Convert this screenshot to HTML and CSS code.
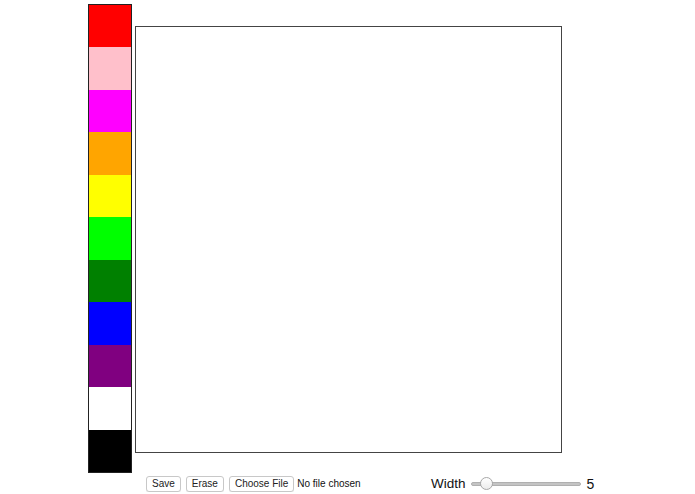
FILE: index.html
```html
<!DOCTYPE html>
<html>
<head>
<meta charset="utf-8">
<link rel="stylesheet" href="styles.css">
</head>
<body>
<div class="stage">
  <div class="palette">
    <div class="swatch red"></div>
    <div class="swatch pink"></div>
    <div class="swatch magenta"></div>
    <div class="swatch orange"></div>
    <div class="swatch yellow"></div>
    <div class="swatch lime"></div>
    <div class="swatch green"></div>
    <div class="swatch blue"></div>
    <div class="swatch purple"></div>
    <div class="swatch white"></div>
    <div class="swatch black"></div>
  </div>
  <div class="canvas"></div>
</div>
<div class="controls">
  <div class="buttons">
    <button class="btn">Save</button>
    <button class="btn">Erase</button>
    <button class="btn">Choose File</button>
    <span class="filename">No file chosen</span>
  </div>
  <div class="width">
    <span class="width-label">Width</span>
    <div class="slider">
      <div class="track"></div>
      <div class="thumb"></div>
    </div>
    <span class="width-value">5</span>
  </div>
</div>
</body>
</html>
```
FILE: styles.css
```css
html, body {
  margin: 0;
  padding: 0;
  background: #fff;
  font-family: "Liberation Sans", Arial, sans-serif;
}
.stage {
  display: flex;
  align-items: flex-start;
  padding: 4px 0 0 88px;
}
.palette {
  width: 42px;
  height: 467px;
  border: 1px solid #222;
  display: flex;
  flex-direction: column;
}
.swatch { flex: 1; }
.red { background: #ff0000; }
.pink { background: #ffc0cb; }
.magenta { background: #ff00ff; }
.orange { background: #ffa500; }
.yellow { background: #ffff00; }
.lime { background: #00ff00; }
.green { background: #008000; }
.blue { background: #0000ff; }
.purple { background: #800080; }
.white { background: #ffffff; }
.black { background: #000000; }
.canvas {
  margin: 22px 0 0 3px;
  width: 425px;
  height: 425px;
  border: 1px solid #444;
  background: #fff;
}
.controls {
  display: flex;
  align-items: center;
  padding: 2px 0 0 146px;
  height: 17px;
}
.buttons {
  display: flex;
  align-items: center;
  gap: 5px;
  width: 285px;
}
.btn {
  font-family: "Liberation Sans", Arial, sans-serif;
  font-size: 10px;
  color: #222;
  background: #fff;
  border: 1px solid #c8c8c8;
  border-radius: 3px;
  height: 16px;
  padding: 0 5px;
  margin: 0;
  line-height: 14px;
  box-shadow: 0 1px 0 rgba(0,0,0,0.06);
}
.filename {
  font-size: 10px;
  color: #111;
  margin-left: -2px;
}
.width {
  display: flex;
  align-items: center;
}
.width-label {
  font-size: 13.5px;
  color: #111;
}
.slider {
  position: relative;
  width: 110px;
  height: 16px;
  margin-left: 5px;
}
.track {
  position: absolute;
  left: 0;
  right: 0;
  top: 6px;
  height: 4px;
  background: #c4c4c4;
  border: 1px solid #b0b0b0;
  border-radius: 2px;
  box-sizing: border-box;
}
.thumb {
  position: absolute;
  left: 9px;
  top: 1px;
  width: 13px;
  height: 13px;
  border-radius: 50%;
  background: linear-gradient(#fff, #ececec);
  border: 1px solid #a8a8a8;
  box-sizing: border-box;
}
.width-value {
  font-size: 14px;
  color: #111;
  margin-left: 6px;
}
```
